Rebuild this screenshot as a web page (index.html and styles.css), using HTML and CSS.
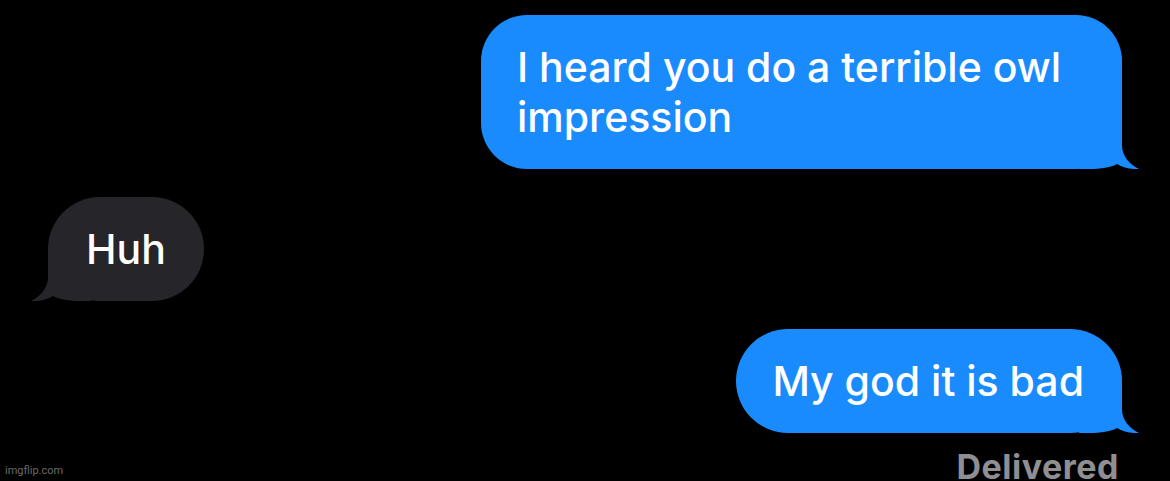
FILE: index.html
```html
<!DOCTYPE html>
<html lang="en">
<head>
    <meta charset="UTF-8">
    <meta name="viewport" content="width=device-width, initial-scale=1.0">
    <title>Messages</title>
    <link rel="stylesheet" href="styles.css">
</head>
<body>

    <div class="chat">
        <div class="row sent">
            <div class="bubble blue wide">I heard you do a terrible owl impression
                <svg class="tail" viewBox="0 0 60 50"><path d="M0 0H43V26C43 37 50 45 60 50C52 50.5 44 48.5 38 45C32 48.5 22 50 10 50H0Z"/></svg>
            </div>
        </div>
        <div class="row received">
            <div class="bubble gray">Huh
                <svg class="tail" viewBox="0 0 60 50"><path d="M0 0H43V26C43 37 50 45 60 50C52 50.5 44 48.5 38 45C32 48.5 22 50 10 50H0Z"/></svg>
            </div>
        </div>
        <div class="row sent">
            <div class="bubble blue">My god it is bad
                <svg class="tail" viewBox="0 0 60 50"><path d="M0 0H43V26C43 37 50 45 60 50C52 50.5 44 48.5 38 45C32 48.5 22 50 10 50H0Z"/></svg>
            </div>
        </div>
        <div class="status">Delivered</div>
    </div>

    <div class="watermark">imgflip.com</div>

</body>
</html>
```

FILE: styles.css
```css
body {
    margin: 0;
    padding: 0;
    background-color: #000;
    font-family: Inter, "Noto Sans", sans-serif;
    height: 481px;
    overflow: hidden;
    position: relative;
}
.chat {
    display: flex;
    flex-direction: column;
    gap: 28px;
    padding: 15px 48px 0 48px;
}
.row {
    display: flex;
}
.sent {
    justify-content: flex-end;
}
.received {
    justify-content: flex-start;
}
.bubble {
    position: relative;
    z-index: 0;
    box-sizing: border-box;
    font-size: 41px;
    font-weight: 500;
    line-height: 50px;
    color: #fff;
    padding: 27px 38px 27px 36px;
    border-radius: 52px;
}
.wide {
    width: 641px;
    border-radius: 46px;
}
.blue {
    background-color: #1a8bfd;
}
.gray {
    background-color: #26252a;
    padding-left: 38px;
}
/* tail */
.tail {
    position: absolute;
    z-index: -1;
    bottom: 0;
    width: 60px;
    height: 50px;
    display: block;
}
.blue .tail {
    right: -17px;
    fill: #1a8bfd;
}
.gray .tail {
    left: -17px;
    fill: #26252a;
    transform: scaleX(-1);
}
.status {
    align-self: flex-end;
    margin-top: -14px;
    margin-right: 3px;
    color: #8e8e93;
    font-size: 34px;
    line-height: 40px;
    font-weight: 700;
    letter-spacing: 0.5px;
}
.watermark {
    position: absolute;
    left: 5px;
    bottom: 4px;
    color: #6b6b6b;
    font-size: 11px;
    font-family: Roboto, "Liberation Sans", sans-serif;
}
```
